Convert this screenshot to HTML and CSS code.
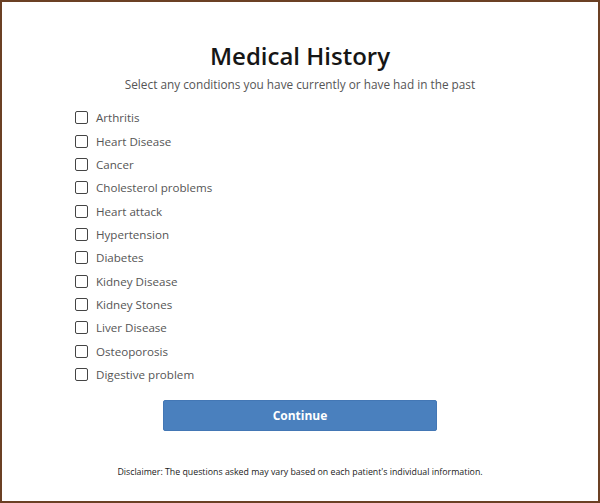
FILE: index.html
```html
<!DOCTYPE html>
<html>
<head>
<meta charset="utf-8">
<link rel="stylesheet" href="styles.css">
</head>
<body>
<div class="frame">
  <h1 class="title">Medical History</h1>
  <p class="subtitle">Select any conditions you have currently or have had in the past</p>
  <ul class="list">
    <li class="item"><span class="box"></span><span class="label">Arthritis</span></li>
    <li class="item"><span class="box"></span><span class="label">Heart Disease</span></li>
    <li class="item"><span class="box"></span><span class="label">Cancer</span></li>
    <li class="item"><span class="box"></span><span class="label">Cholesterol problems</span></li>
    <li class="item"><span class="box"></span><span class="label">Heart attack</span></li>
    <li class="item"><span class="box"></span><span class="label">Hypertension</span></li>
    <li class="item"><span class="box"></span><span class="label">Diabetes</span></li>
    <li class="item"><span class="box"></span><span class="label">Kidney Disease</span></li>
    <li class="item"><span class="box"></span><span class="label">Kidney Stones</span></li>
    <li class="item"><span class="box"></span><span class="label">Liver Disease</span></li>
    <li class="item"><span class="box"></span><span class="label">Osteoporosis</span></li>
    <li class="item"><span class="box"></span><span class="label">Digestive problem</span></li>
  </ul>
  <div class="actions"><button class="btn">Continue</button></div>
  <p class="disclaimer">Disclaimer: The questions asked may vary based on each patient's individual information.</p>
</div>
</body>
</html>
```
FILE: styles.css
```css
html, body {
  margin: 0;
  padding: 0;
  background: #fff;
}
.frame {
  box-sizing: border-box;
  width: 600px;
  height: 503px;
  border: 2px solid #6b4024;
  font-family: "Open Sans", "Noto Sans", sans-serif;
  display: flex;
  flex-direction: column;
  align-items: center;
  padding-top: 38px;
}
.title {
  margin: 0;
  font-size: 24px;
  font-weight: 600;
  color: #161616;
  line-height: 32px;
}
.subtitle {
  margin: 4px 0 0;
  font-size: 11.8px;
  color: #555;
  line-height: 16px;
}
.list {
  list-style: none;
  margin: 14px 0 0;
  padding: 0 0 0 73px;
  align-self: stretch;
}
.item {
  display: flex;
  align-items: center;
  height: 23.35px;
}
.box {
  box-sizing: border-box;
  width: 13px;
  height: 13px;
  border: 1.5px solid #444;
  border-radius: 2px;
  margin-right: 8px;
}
.label {
  font-size: 11.6px;
  color: #555;
}
.actions {
  margin-top: 14px;
}
.btn {
  width: 274px;
  height: 31px;
  border: 1px solid #4377b5;
  border-radius: 2px;
  background: #4a80be;
  color: #fff;
  font-family: "Open Sans", sans-serif;
  font-weight: 700;
  font-size: 12px;
  padding: 0;
}
.disclaimer {
  margin: 35px 0 0;
  font-size: 8.8px;
  color: #222;
}
```
